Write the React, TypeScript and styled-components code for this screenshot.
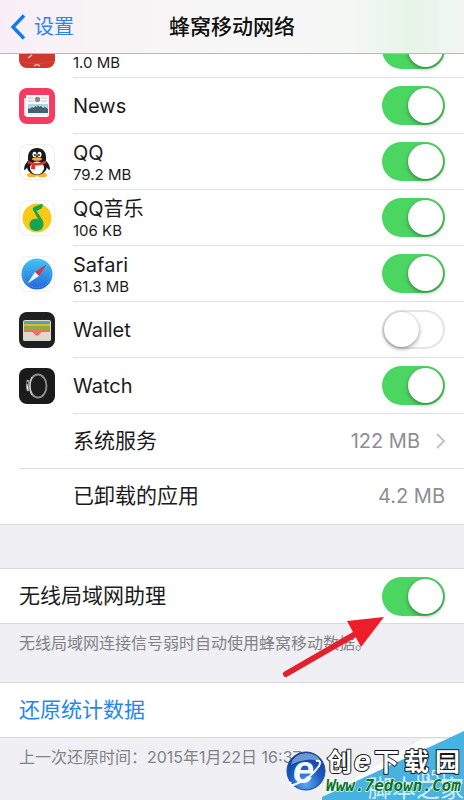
import React, { useState } from "react";
import styled, { createGlobalStyle } from "styled-components";

const GlobalStyle = createGlobalStyle`
  * { box-sizing: border-box; }
  html, body { margin: 0; height: 100%; background: #efeff4; overflow: hidden; }
  body { font-family: Inter, "Noto Sans CJK SC", sans-serif; color: #1b1b1b; }
  #root { height: 100%; }
  button, input { font: inherit; }
`;

const Screen = styled.div`
  position: relative;
  min-height: 100%;
  overflow: hidden;
`;

const NavBar = styled.header`
  position: relative;
  z-index: 1;
  display: grid;
  grid-template-columns: 1fr auto 1fr;
  align-items: center;
  height: 54px;
  padding: 0 10px;
  border-bottom: 1px solid #b9b9bb;
  background: linear-gradient(90deg, #f8eef8 0%, #f8f3f5 20%, #f7f7f7 50%, #f5f7f5 75%, #e6f5e8 88%, #f2f6f3 100%);
`;

const BackButton = styled.button`
  display: flex;
  align-items: center;
  justify-self: start;
  gap: 8px;
  padding: 0;
  border: 0;
  background: none;
  color: #2b84ef;
  font-size: 20px;
  line-height: 28px;
`;

const Title = styled.h1`
  margin: 0;
  font-size: 21px;
  line-height: 28px;
  font-weight: 500;
  color: #101010;
`;

const AppList = styled.ul`
  margin: -32px 0 0;
  padding: 0;
  list-style: none;
  background: #fff;
  border-bottom: 1px solid #d9d9dd;
`;

const Row = styled.li<{ $compact?: boolean }>`
  display: flex;
  align-items: stretch;
  height: ${(p) => (p.$compact ? 55 : 56)}px;
  padding-left: 19px;
`;

const IconSlot = styled.div`
  display: flex;
  align-items: center;
  flex: 0 0 54px;
  svg { display: block; }
`;

const RowBody = styled.div<{ $line?: boolean }>`
  display: flex;
  flex: 1;
  align-items: center;
  justify-content: space-between;
  padding-right: 19px;
  border-bottom: 1px solid ${(p) => (p.$line === false ? "transparent" : "#dedee0")};
`;

const DividerRow = styled(Row)`
  border-bottom: 0;
  & > ${IconSlot} { border-bottom: 1px solid #dedee0; }
`;

const Labels = styled.label`
  display: flex;
  flex-direction: column;
`;

const Name = styled.span`
  font-size: 20px;
  line-height: 26px;
`;

const ChineseName = styled(Name)`
  font-size: 21px;
`;

const Usage = styled.span`
  font-size: 15px;
  line-height: 17px;
`;

const Amount = styled.span`
  display: flex;
  align-items: center;
  gap: 16px;
  font-size: 20px;
  line-height: 26px;
  color: #8e8e93;
`;

const Toggle = styled.input`
  appearance: none;
  flex: none;
  width: 63px;
  height: 39px;
  margin: 0;
  padding: 2px;
  border-radius: 20px;
  background: #fff;
  box-shadow: inset 0 0 0 2px #e4e4e6;
  &::before {
    content: "";
    display: block;
    width: 35px;
    height: 35px;
    border-radius: 50%;
    background: #fff;
    box-shadow: 0 2px 4px rgba(0, 0, 0, 0.35), 0 0 1px rgba(0, 0, 0, 0.3);
  }
  &:checked {
    background: #4bd662;
    box-shadow: none;
  }
  &:checked::before { margin-left: 24px; }
`;

const Group = styled.section<{ $gap?: number }>`
  display: flex;
  align-items: center;
  justify-content: space-between;
  height: 56px;
  margin-top: ${(p) => p.$gap}px;
  padding: 0 19px;
  background: #fff;
  border-top: 1px solid #d9d9dd;
  border-bottom: 1px solid #d9d9dd;
`;

const ResetButton = styled.button`
  padding: 0;
  border: 0;
  background: none;
  color: #2386f0;
  font-size: 21px;
  line-height: 28px;
`;

const Note = styled.p`
  margin: 0;
  padding: 7px 19px 0;
  font-size: 16px;
  line-height: 24px;
  white-space: nowrap;
  color: #828287;
`;

const Arrow = styled.svg`
  position: absolute;
  left: 280px;
  top: 612px;
`;

const SiteMark = styled.svg`
  position: absolute;
  right: 0;
  top: 728px;
`;

const icons: Record<string, React.ReactNode> = {
  red: (
    <>
      <rect width="36" height="36" rx="8" fill="#cd382f" />
      <path d="M9 26l4-3M15 34q3-3 6 0" fill="none" stroke="#fbd5cf" strokeWidth="1.2" />
      <path d="M0 29q18 5 36 0" fill="none" stroke="#e0463b" />
    </>
  ),
  news: (
    <>
      <rect width="36" height="36" rx="8" fill="#f53b62" />
      <path d="M5 10h3v18H6q-1 0-1-2z" fill="#fbdde3" />
      <path d="M7 7h23v20q0 2-2 2H7z" fill="#fbfafa" />
      <path d="M9 10h6M9 13h6M22 10h6M22 13h6" stroke="#c8c3c5" />
      <circle cx="18.500" cy="11.500" r="2.700" fill="#8c8588" />
      <path d="M9 16h20v8H9z" fill="#a8d8e6" />
      <path d="M9 20l2 1 2-2 2 1 1-2 2 1 1-2 1 2 2-1 2 2 2-1 3 2v4H9z" fill="#45616e" />
      <path d="M9 26h20" stroke="#e7e3e4" />
    </>
  ),
  qq: (
    <>
      <rect x=".5" y=".5" width="35" height="35" rx="8" fill="#fff" stroke="#eeeef0" />
      <ellipse cx="13" cy="31" rx="5" ry="2.300" fill="#f4b52a" />
      <ellipse cx="23" cy="31" rx="5" ry="2.300" fill="#f4b52a" />
      <path d="M10 16Q5 20 5 26q2 0 4-4zM26 16q5 4 5 10-2 0-4-4z" fill="#1b191b" />
      <path d="M18 4c-6 0-9 4-9 9v4c-2 4-2 13 9 14 11-1 11-10 9-14v-4c0-5-3-9-9-9z" fill="#1b191b" />
      <ellipse cx="18" cy="24" rx="7" ry="6.500" fill="#fff" />
      <ellipse cx="15.500" cy="10.500" rx="2" ry="2.800" fill="#fff" />
      <ellipse cx="20.500" cy="10.500" rx="2" ry="2.800" fill="#fff" />
      <circle cx="16" cy="11" r=".9" fill="#111" />
      <circle cx="20" cy="11" r=".9" fill="#111" />
      <ellipse cx="18" cy="15" rx="5" ry="1.800" fill="#f5b52a" />
      <path d="M9 16.500q9 5 18 0v3q-6 2.500-11 2v4l-4-.5.500-4.500L9 19.500z" fill="#e3312b" />
    </>
  ),
  music: (
    <>
      <rect x=".5" y=".5" width="35" height="35" rx="8" fill="#fff" stroke="#f1f1f3" />
      <circle cx="18" cy="18" r="14.500" fill="#f8c917" />
      <path
        d="M23.500 3.500L15 7q-2 1-1 3l5 9q-8-1-8.500 5.500 0 6.500 7 6.500 7.500-.5 7-8-.5-3-3-6l-4-6 5-2.500q2-2 1-5z"
        fill="#14a552"
      />
    </>
  ),
  safari: (
    <>
      <defs>
        <linearGradient id="safari-face" x1="0" y1="0" x2="0" y2="1">
          <stop offset="0" stopColor="#3fc7f5" />
          <stop offset="1" stopColor="#2765dc" />
        </linearGradient>
      </defs>
      <rect x=".5" y=".5" width="35" height="35" rx="8" fill="#fff" stroke="#f1f1f3" />
      <circle cx="18" cy="18" r="15.500" fill="url(#safari-face)" />
      <circle cx="18" cy="18" r="13.500" fill="none" stroke="#6cc0f2" strokeWidth="1" strokeDasharray=".7 1.600" />
      <path d="M27.500 8.500L16 16l4 4z" fill="#dc3148" />
      <path d="M8.500 27.500L16 16l4 4z" fill="#f6f8fa" />
    </>
  ),
  wallet: (
    <>
      <rect width="36" height="36" rx="8" fill="#1f201f" />
      <rect x="4" y="8" width="28" height="21" rx="2" fill="#ded9cd" />
      <path d="M5 10q0-1 1-1h24q1 0 1 1v3H5z" fill="#5aa0b4" />
      <path d="M5 12h26v4H5z" fill="#e5b633" />
      <path d="M5 14h26v5H5z" fill="#8fac3f" />
      <path d="M5 18h26v3H5z" fill="#e8735e" />
      <path d="M4 20h9q1 0 2 1.500t3 1.500 3-1.500T23 20h9v7q0 2-2 2H6q-2 0-2-2z" fill="#ded9cd" />
      <path d="M14 20h8l-2 3q-2 1.500-4 0z" fill="#e8735e" />
    </>
  ),
  watch: (
    <>
      <rect width="36" height="36" rx="8" fill="#1b1b1c" />
      <ellipse cx="19" cy="18" rx="8.500" ry="11.500" fill="none" stroke="#8e8e90" strokeWidth="1.800" />
      <path d="M13 9Q9 18 13 27" fill="none" stroke="#c9c9cb" strokeWidth="1.500" />
      <path d="M9 12q-1.500 6 0 11" fill="none" stroke="#a5a5a7" strokeWidth="2.600" />
      <circle cx="8.500" cy="15" r=".9" fill="#2a2a2b" />
      <path d="M8.500 18v3.500" stroke="#ececec" />
    </>
  ),
};

function AppIcon({ name }: { name: string }) {
  return (
    <svg width="36" height="36" viewBox="0 0 36 36" aria-hidden="true">
      {icons[name]}
    </svg>
  );
}

function Switch({ id, initial, label }: { id: string; initial: boolean; label?: string }) {
  const [on, setOn] = useState(initial);
  return (
    <Toggle id={id} type="checkbox" role="switch" aria-label={label} checked={on} onChange={() => setOn(!on)} />
  );
}

const apps = [
  { icon: "red", name: "", usage: "1.0 MB", on: true },
  { icon: "news", name: "News", on: true },
  { icon: "qq", name: "QQ", usage: "79.2 MB", on: true },
  { icon: "music", name: "QQ音乐", usage: "106 KB", on: true },
  { icon: "safari", name: "Safari", usage: "61.3 MB", on: true },
  { icon: "wallet", name: "Wallet", on: false },
  { icon: "watch", name: "Watch", on: true },
];

export default function App() {
  return (
    <Screen>
      <GlobalStyle />
      <NavBar>
        <BackButton type="button">
          <svg width="16" height="26" viewBox="0 0 16 26" aria-hidden="true">
            <path d="M14 1.500L3 13l11 11.500" fill="none" stroke="#1479ee" strokeWidth="3.400" />
          </svg>
          设置
        </BackButton>
        <Title>蜂窝移动网络</Title>
      </NavBar>
      <AppList>
        {apps.map((app) => (
          <Row key={app.icon}>
            <IconSlot>
              <AppIcon name={app.icon} />
            </IconSlot>
            <RowBody>
              <Labels htmlFor={app.icon}>
                <Name>{app.name || "\u00a0"}</Name>
                {app.usage && <Usage>{app.usage}</Usage>}
              </Labels>
              <Switch id={app.icon} initial={app.on} label={app.name || app.usage} />
            </RowBody>
          </Row>
        ))}
        <DividerRow $compact>
          <IconSlot />
          <RowBody>
            <ChineseName>系统服务</ChineseName>
            <Amount>
              122 MB
              <svg width="9" height="16" viewBox="0 0 9 16" aria-hidden="true">
                <path d="M1 1l7 7-7 7" fill="none" stroke="#c3c3c8" strokeWidth="2" />
              </svg>
            </Amount>
          </RowBody>
        </DividerRow>
        <Row $compact>
          <IconSlot />
          <RowBody $line={false}>
            <ChineseName>已卸载的应用</ChineseName>
            <Amount>4.2 MB</Amount>
          </RowBody>
        </Row>
      </AppList>
      <Group $gap={43}>
        <label htmlFor="assist">
          <ChineseName>无线局域网助理</ChineseName>
        </label>
        <Switch id="assist" initial />
      </Group>
      <Note>无线局域网连接信号弱时自动使用蜂窝移动数据。</Note>
      <Group $gap={27}>
        <ResetButton type="button">还原统计数据</ResetButton>
      </Group>
      <Note>上一次还原时间：2015年1月22日 16:37</Note>

      <Arrow width="110" height="70" viewBox="0 0 110 70" aria-hidden="true">
        <path d="M6 62L84 17" stroke="#e3202b" strokeWidth="6" strokeLinecap="round" />
        <path d="M104 5L67 9l14 26z" fill="#ec1f28" />
      </Arrow>

      <SiteMark width="184" height="72" viewBox="0 0 184 72" role="img" aria-label="创e下载园 Www.7edown.Com">
        <defs>
          <radialGradient id="globe" cx=".5" cy=".85" r=".8">
            <stop offset="0" stopColor="#58a8ef" />
            <stop offset=".55" stopColor="#1c5cc0" />
            <stop offset="1" stopColor="#123b92" />
          </radialGradient>
        </defs>
        <path d="M44 68L142 11H184V72H44z" fill="#fff" />
        <path d="M184 3L42 69v3H184z" fill="#47b3e0" />
        <g fill="#d3eef8" fontFamily="'Noto Sans CJK SC', sans-serif">
          <text x="136" y="54" fontSize="16">jb51</text>
          <text x="88" y="69" fontSize="24">脚本之家</text>
        </g>
        <circle cx="26" cy="43" r="19" fill="url(#globe)" stroke="#1b4796" />
        <path d="M11 37q2-11 15-12 12 0 16 11-8-6-16-4-9 1-15 5z" fill="#a9d0f4" opacity=".6" />
        <text x="13" y="55" fontFamily="'Liberation Sans', sans-serif" fontWeight="700" fontStyle="italic" fontSize="38" fill="#f5faff">e</text>
        <path d="M11 54q-3 5 5 2 14-5 23-18 3-6-3-5" fill="none" stroke="#f2f8ff" strokeWidth="2" />
        <g
          fontFamily="'Noto Sans CJK SC', sans-serif"
          fontWeight="700"
          fill="#fff"
          stroke="#171717"
          strokeWidth="2"
          paintOrder="stroke"
          strokeLinejoin="round"
          fontSize="25"
        >
          <text x="47" y="43">创</text>
          <text x="74" y="43" fontSize="30" fontFamily="'Liberation Sans', sans-serif" fontStyle="italic">e</text>
          <text x="94" y="43">下</text>
          <text x="124" y="43">载</text>
          <text x="155" y="43">园</text>
        </g>
        <text
          x="46"
          y="63"
          fontFamily="'DejaVu Sans Mono', monospace"
          fontWeight="700"
          fontStyle="italic"
          fontSize="16"
          fill="#087324"
          stroke="#fff"
          strokeWidth="1"
          paintOrder="stroke"
        >
          Www.7edown.Com
        </text>
      </SiteMark>
    </Screen>
  );
}
